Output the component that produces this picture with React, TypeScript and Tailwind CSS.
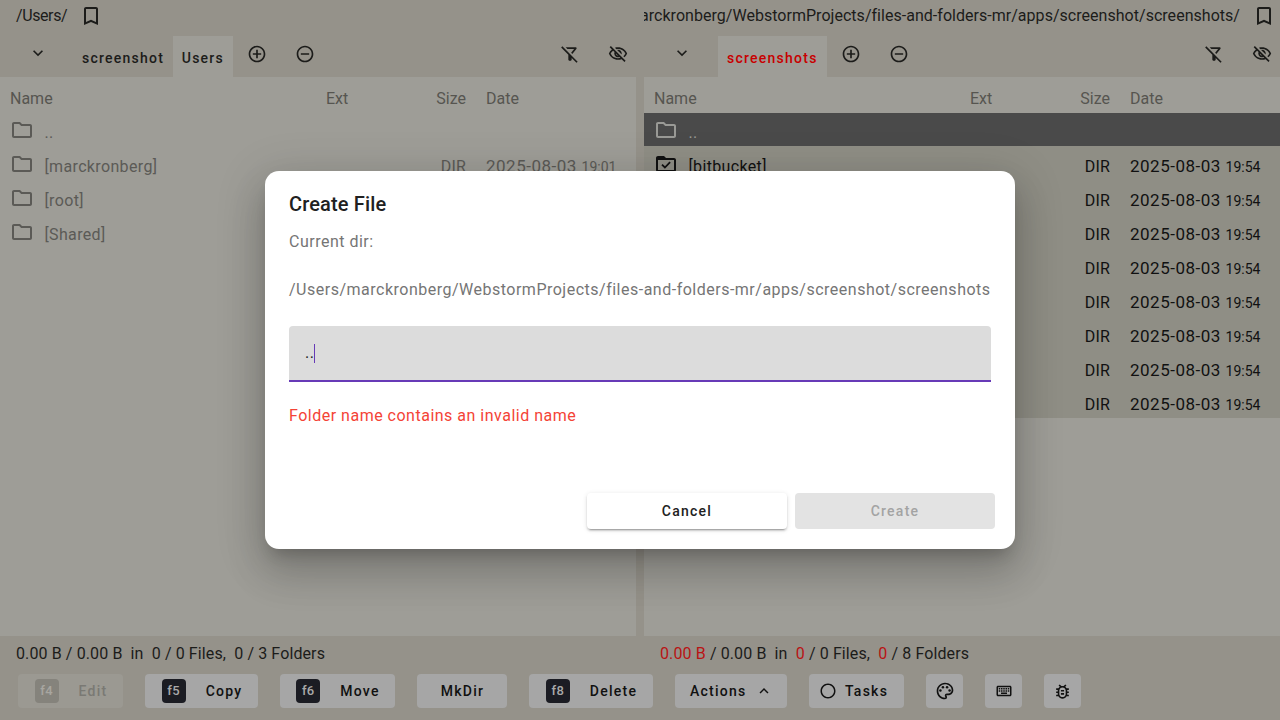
import { type JSX, type ReactNode } from "react"
import {
  MdBookmarkBorder,
  MdControlPoint,
  MdExpandLess,
  MdKeyboardArrowDown,
  MdOutlineBugReport,
  MdOutlineFilterAltOff,
  MdOutlineFolder,
  MdOutlineKeyboard,
  MdOutlinePalette,
  MdOutlineVisibilityOff,
  MdRadioButtonUnchecked,
  MdRemoveCircleOutline,
} from "react-icons/md"

type Row = { name: string; size?: string; date?: string; time?: string; checked?: boolean; selected?: boolean }

const leftRows: Row[] = [
  { name: ".." },
  { name: "[marckronberg]", size: "DIR", date: "2025-08-03", time: "19:01" },
  { name: "[root]" },
  { name: "[Shared]" },
]

const rightRows: Row[] = [
  { name: "..", selected: true },
  { name: "[bitbucket]", size: "DIR", date: "2025-08-03", time: "19:54", checked: true },
  ...Array.from({ length: 7 }, () => ({ name: "", size: "DIR", date: "2025-08-03", time: "19:54" })),
]

const FolderCheck = (): JSX.Element => (
  <svg width="24" height="24" viewBox="0 0 24 24" fill="currentColor" className="shrink-0">
    <path d="M20 6h-8l-2-2H4c-1.1 0-1.99.9-1.99 2L2 18c0 1.1.9 2 2 2h16c1.1 0 2-.9 2-2V8c0-1.1-.9-2-2-2zm0 12H4V8h16v10z" />
    <path d="M8 12.6l2.9 2.9 5.2-5.4" fill="none" stroke="currentColor" strokeWidth="1.8" />
  </svg>
)

const FileRow = ({ row, active, first }: { row: Row; active: boolean; first: boolean }): JSX.Element => {
  const rowColor = row.selected
    ? "bg-[#4a4a4a] text-[#9a9a96]"
    : active
      ? "bg-[#8f8e85] text-[#111111]"
      : "text-[#5b5a56]"
  return (
    <div className={`grid grid-cols-[316px_100px_40px_1fr] items-center pl-[10px] ${first ? "h-[33px]" : "h-[34px]"} ${rowColor}`}>
      <div className={`flex items-center gap-[10.5px] ${first ? "" : "pt-0.5"}`}>
        {row.checked ? <FolderCheck /> : <MdOutlineFolder size={24} className="shrink-0" />}
        <span className="pt-[6px] text-base leading-6 tracking-[0.35px]">{row.name}</span>
      </div>
      <span />
      <span className="pt-2 text-right text-base leading-6 tracking-[0.2px]">{row.size}</span>
      <span className="pt-[6px] pl-5 text-[17px] leading-6 tracking-[0.5px] whitespace-nowrap">
        {row.date} <span className="text-sm tracking-normal">{row.time}</span>
      </span>
    </div>
  )
}

const Pane = ({
  tabs,
  rows,
  active,
}: {
  tabs: ReactNode
  rows: Row[]
  active: boolean
}): JSX.Element => (
  <div className="flex min-h-0 flex-1 flex-col">
    <div className="flex h-[41px] shrink-0 items-stretch text-[#1c1c1a]">
      <div className="flex w-[74px] shrink-0 items-center pb-2 pl-[28px]">
        <MdKeyboardArrowDown size={20} />
      </div>
      {tabs}
      <div className="flex w-12 items-center justify-center pb-1.5"><MdControlPoint size={20} /></div>
      <div className="flex w-12 items-center justify-center pb-1.5"><MdRemoveCircleOutline size={20} /></div>
      <div className="ml-auto flex w-12 items-center justify-center pb-1.5"><MdOutlineFilterAltOff size={20} /></div>
      <div className="-mr-1.5 flex w-12 items-center justify-center pb-1.5"><MdOutlineVisibilityOff size={20} /></div>
    </div>
    <div className="flex-1 bg-[#9e9d97]">
      <div className="grid h-9 grid-cols-[316px_100px_40px_1fr] items-center pl-[10px] pt-[7px] text-base text-[#565550]">
        <span>Name</span>
        <span>Ext</span>
        <span className="text-right">Size</span>
        <span className="pl-5">Date</span>
      </div>
      {rows.map((row, i) => (
        <FileRow key={i} row={row} active={active} first={i === 0} />
      ))}
    </div>
  </div>
)

const Tab = ({ label, on, red }: { label: string; on?: boolean; red?: boolean }): JSX.Element => (
  <div
    className={`flex items-center px-[9px] pt-[3px] text-sm font-medium tracking-[1.25px] ${on ? "bg-[#9e9d97]" : ""} ${red ? "text-[#c80000]" : ""}`}
  >
    {label}
  </div>
)

const Key = ({ label, dim }: { label: string; dim?: boolean }): JSX.Element => (
  <span
    className={`mr-5 flex h-6 w-6 items-center justify-center rounded-[4px] text-[13px] font-medium tracking-[0.3px] ${dim ? "bg-[#85837c] text-[#a8a6a0]" : "bg-[#1b1c23] text-[#a9a9a9]"}`}
  >
    {label}
  </span>
)

const Btn = ({ children, className, off }: { children: ReactNode; className: string; off?: boolean }): JSX.Element => (
  <div
    className={`flex h-[34px] shrink-0 items-center rounded-[4px] text-sm font-medium tracking-[1.25px] ${off ? "bg-[#9b9992] text-[#7a7974]" : "bg-[#a6a6a6] text-[#111111]"} ${className}`}
  >
    {children}
  </div>
)

export default function App(): JSX.Element {
  return (
    <div className="relative flex h-[720px] w-[1280px] flex-col overflow-hidden bg-[#95928a] font-['Roboto',sans-serif] text-[#1c1c1a] antialiased">
      <div className="flex min-h-0 flex-1 gap-2">
        <div className="flex w-[636px] flex-col">
          <div className="flex h-9 shrink-0 items-center gap-3 pb-1 pl-4 text-base">
            <span className="tracking-[-0.4px]">/Users/</span>
            <MdBookmarkBorder size={24} />
          </div>
          <Pane
            active={false}
            rows={leftRows}
            tabs={
              <>
                <div className="-ml-px flex pr-[0.5px]">
                  <Tab label="screenshot" />
                </div>
                <div className="-ml-px flex">
                  <Tab label="Users" on />
                </div>
              </>
            }
          />
        </div>
        <div className="flex w-[636px] flex-col">
          <div className="flex h-9 shrink-0 items-center justify-end gap-3 overflow-hidden pr-1 pb-1 text-base">
            <span className="shrink-0 tracking-[0.03px]">/Users/marckronberg/WebstormProjects/files-and-folders-mr/apps/screenshot/screenshots/</span>
            <MdBookmarkBorder size={24} className="shrink-0" />
          </div>
          <Pane active rows={rightRows} tabs={<Tab label="screenshots" on red />} />
        </div>
      </div>

      <div className="flex h-9 shrink-0 items-center gap-2 text-base tracking-[0.11px]">
        <div className="w-[636px] pl-4 whitespace-pre">0.00 B / 0.00 B  in  0 / 0 Files,  0 / 3 Folders</div>
        <div className="w-[636px] pl-4 whitespace-pre">
          <span className="text-[#b91414]">0.00 B</span> / 0.00 B  in  <span className="text-[#b91414]">0</span> / 0 Files,  <span className="text-[#b91414]">0</span> / 8 Folders
        </div>
      </div>

      <div className="flex h-[48px] shrink-0 gap-[22px] pt-0.5 pl-[18px]">
        <Btn off className="w-[105px] justify-center pl-px"><Key label="f4" dim />Edit</Btn>
        <Btn className="w-[113px] justify-center pl-px"><Key label="f5" />Copy</Btn>
        <Btn className="w-[115px] justify-center pl-px"><Key label="f6" />Move</Btn>
        <Btn className="w-[90px] justify-center pl-px">MkDir</Btn>
        <Btn className="w-[124px] justify-center pl-px"><Key label="f8" />Delete</Btn>
        <Btn className="w-[112px] gap-2 pl-[15px]">Actions <MdExpandLess size={18} /></Btn>
        <Btn className="w-[95px] gap-2 pl-[10px]"><MdRadioButtonUnchecked size={18} />Tasks</Btn>
        <Btn className="w-[37px] justify-center"><MdOutlinePalette size={20} /></Btn>
        <Btn className="w-[37px] justify-center"><MdOutlineKeyboard size={18} /></Btn>
        <Btn className="w-[37px] justify-center"><MdOutlineBugReport size={19} /></Btn>
      </div>

      <div className="absolute inset-0 flex items-center justify-center">
        <div className="flex h-[378px] w-[750px] flex-col rounded-[14px] bg-white pt-[17px] pr-5 pb-5 pl-6 shadow-[0_11px_15px_-7px_rgba(0,0,0,0.2),0_24px_38px_3px_rgba(0,0,0,0.14),0_9px_46px_8px_rgba(0,0,0,0.12)]">
          <h2 className="text-xl leading-8 font-medium tracking-[0.15px] text-[#212121]">Create File</h2>
          <p className="mt-[10px] text-base leading-6 tracking-[0.5px] text-[#757575]">Current dir:</p>
          <p className="mt-6 text-base leading-6 tracking-[0.5px] whitespace-nowrap text-[#757575]">
            /Users/marckronberg/WebstormProjects/files-and-folders-mr/apps/screenshot/screenshots
          </p>
          <div className="mt-6 mr-1 flex h-14 items-center rounded-t-[4px] border-b-2 border-[#673ab7] bg-[#dcdcdc] pl-4 text-base text-[#212121]">
            <span className="tracking-[0.5px]">..</span>
            <span className="h-[19px] w-px bg-[#673ab7]" />
          </div>
          <p className="mt-[22px] text-base leading-6 tracking-[0.5px] text-[#f44336]">Folder name contains an invalid name</p>
          <div className="mt-auto flex justify-end gap-2">
            <div className="flex h-9 w-[200px] items-center justify-center rounded-[4px] bg-white text-sm font-medium tracking-[1.25px] text-[#212121] shadow-[0_3px_1px_-2px_rgba(0,0,0,0.2),0_2px_2px_0_rgba(0,0,0,0.14),0_1px_5px_0_rgba(0,0,0,0.12)]">
              Cancel
            </div>
            <div className="flex h-9 w-[200px] items-center justify-center rounded-[4px] bg-[#e3e3e3] text-sm font-medium tracking-[1.25px] text-[#a3a3a3]">
              Create
            </div>
          </div>
        </div>
      </div>
    </div>
  )
}
